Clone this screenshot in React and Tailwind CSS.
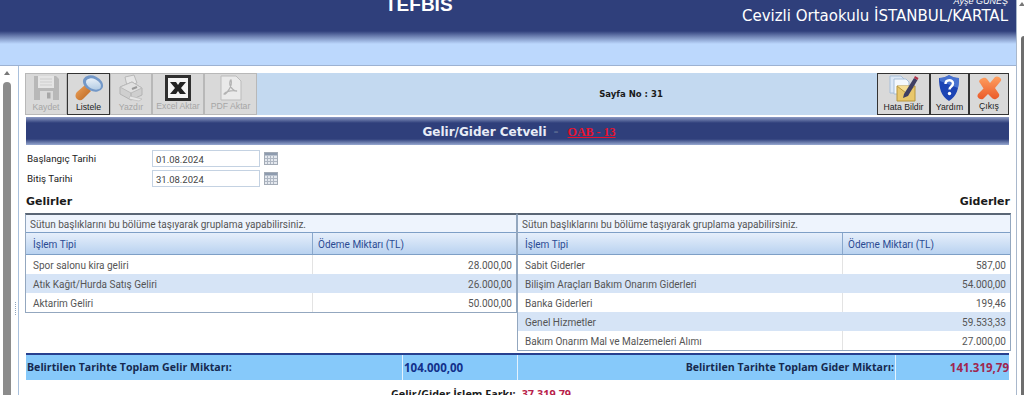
import React from "react";

const Floppy = () => (
  <svg width="28" height="28" viewBox="0 0 28 28">
    <path d="M2 2h22l3 3v21H2z" fill="#a3a3a3" />
    <rect x="6" y="2" width="16" height="12" fill="#eeeeee" />
    <path d="M8 5h12M8 8h12M8 11h12" stroke="#c6c6c6" strokeWidth="1" />
    <rect x="8" y="17" width="13" height="9" fill="#dadada" />
    <rect x="15" y="18.500" width="3.500" height="6" fill="#878787" />
  </svg>
);

const Lens = () => (
  <svg width="30" height="28" viewBox="0 0 30 28">
    <defs>
      <linearGradient id="lensG" x1="0" y1="0" x2="1" y2="1">
        <stop offset="0" stopColor="#f4f8fc" />
        <stop offset="1" stopColor="#a8c4e0" />
      </linearGradient>
      <linearGradient id="handleG" x1="0" y1="0" x2="1" y2="1">
        <stop offset="0" stopColor="#f0a45c" />
        <stop offset="1" stopColor="#b8641f" />
      </linearGradient>
    </defs>
    <path d="M3 18l8-7 6 6-8 8c-2 2-4 1.500-6 0s-2-5 0-7z" fill="url(#handleG)" />
    <ellipse cx="19" cy="9.500" rx="10.500" ry="7.500" transform="rotate(25 19 9.500)" fill="#7398c8" />
    <ellipse cx="19.500" cy="10" rx="8" ry="5" transform="rotate(25 19.500 10)" fill="url(#lensG)" />
  </svg>
);

const Printer = () => (
  <svg width="26" height="28" viewBox="0 0 26 28">
    <path d="M7 3l9-2 3 8-10 3z" fill="#f0f0f0" stroke="#a3a3a3" />
    <path d="M2 13l12-5 10 6v7l-11 5-11-6z" fill="#c9c9c9" stroke="#9b9b9b" />
    <path d="M2 13l11 6 11-5-10-6z" fill="#e6e6e6" stroke="#a8a8a8" />
    <path d="M13 19v7" stroke="#8f8f8f" />
    <path d="M12 22l12 3-3 2-10-2z" fill="#efefef" stroke="#a8a8a8" strokeWidth=".7" />
    <path d="M14 15l5-2" stroke="#707070" strokeWidth="2" />
  </svg>
);

const ExcelIcon = () => (
  <svg width="26" height="26" viewBox="0 0 26 26">
    <rect x="0" y="0" width="26" height="26" fill="#2f2f2f" />
    <rect x="3" y="3" width="20" height="20" fill="#f4f4f4" />
    <path d="M5 7h6l2 3 2-3h6l-5 6 5 6h-6l-2-3-2 3H5l5-6z" fill="#222222" />
  </svg>
);

const PdfIcon = () => (
  <svg width="22" height="26" viewBox="0 0 22 26">
    <path d="M1 1h15l5 5v19H1z" fill="#f6f6f6" stroke="#a9a9a9" />
    <path d="M11 5c1 3 0 7-3 11-1.500 2-3 3.500-4 3 1-2 6-4 13-3-3 .5-6-3-7-6-.5-2 0-5 1-5z" fill="none" stroke="#9a9a9a" strokeWidth="1.300" />
  </svg>
);

const Report = () => (
  <svg width="32" height="28" viewBox="0 0 32 28">
    <path d="M3 2h11l3 3v14H3z" fill="#dce8f6" stroke="#a8bfd8" />
    <path d="M7 5h12l3 3v12H7z" fill="#f4f8fc" stroke="#a8bfd8" />
    <path d="M10 12h18v15H10z" fill="#e9c76a" stroke="#b8963c" />
    <path d="M10 12l9 7 9-7" fill="#f5dd94" stroke="#b8963c" />
    <path d="M17 20L27 4l3.500 2L21 22l-5 2z" fill="#3f3f63" />
    <path d="M27 4l1-2 3.500 2-1 2z" fill="#b03048" />
  </svg>
);

const Shield = () => (
  <svg width="22" height="28" viewBox="0 0 22 28">
    <path d="M11 1c3 2 6 3 10 3 0 10-2 18-10 23C3 22 1 14 1 4c4 0 7-1 10-3z" fill="#1c44b4" />
    <path d="M11 1c3 2 6 3 10 3 0 4-.3 7-1 10L2 7 1.500 4c4 0 6.500-1 9.500-3z" fill="#5b86dc" opacity=".7" />
    <path d="M7.500 10c0-5 7.500-5 7.500-.5 0 3-3.500 3-3.500 6" fill="none" stroke="#fff" strokeWidth="2.400" />
    <circle cx="11.500" cy="19.500" r="1.700" fill="#fff" />
  </svg>
);

const CloseX = () => (
  <svg width="26" height="26" viewBox="0 0 26 26">
    <defs>
      <linearGradient id="xG" x1="0" y1="0" x2="0" y2="1">
        <stop offset="0" stopColor="#ffa060" />
        <stop offset="1" stopColor="#ea5a2a" />
      </linearGradient>
    </defs>
    <path d="M4 8c-2-2 0-4 3-5 2-.5 3 0 4 1l3 4 5-6c2-1.500 5 0 6 2 .5 1 0 2-1 3l-5 6 4 6c1 2-1 4-3 5-2 .5-3 0-4-1l-4-4-5 5c-2 1-5-.5-5.500-2.500 0-1 0-2 1-3l5-5z" fill="url(#xG)" />
  </svg>
);

const Calendar = () => (
  <svg width="14" height="13" viewBox="0 0 14 13">
    <rect x=".5" y=".5" width="13" height="12" fill="#e4e8ee" stroke="#a3abb6" />
    <rect x="1" y="1" width="12" height="2.500" fill="#8e9bae" />
    <path d="M3.500 4v8M6.500 4v8M9.500 4v8M1 6.500h12M1 9.500h12" stroke="#aeb6c2" />
  </svg>
);

function ToolBtn({ icon, label, width, active, solid, faded }) {
  return (
    <div
      className={`flex flex-col items-center justify-between h-[42px] pb-[3px] bg-[#d9d9d9] border ${
        active ? "border-[#333333]" : "border-[#b8b8b8]"
      } ${width}`}
    >
      <div className={`h-[30px] flex items-center justify-center ${faded && !solid ? "opacity-60" : ""}`}>{icon}</div>
      <span className={`text-[8.7px] leading-[10px] ${faded ? "text-[#a6a6a6]" : "text-[#222222]"}`}>{label}</span>
    </div>
  );
}

function DateRow({ label, value }) {
  return (
    <div className="flex items-center h-[17px]">
      <span className="w-[127px] pl-[2px] pt-[1px] text-[9.800px] text-[#222222] font-['Roboto',sans-serif]">{label}</span>
      <div className="w-[108px] h-[17px] border border-[#c4d2e2] bg-white pl-[3px] text-[9.500px] leading-[17px] text-[#444444] font-['Roboto',sans-serif]">
        {value}
      </div>
      <span className="ml-[4px] flex"><Calendar /></span>
    </div>
  );
}

function Grid({ rows, first, width }) {
  return (
    <div className={`${width} border-x border-b border-[#93a7bf] border-t-2 border-t-[#5a6675] font-['Roboto',sans-serif] text-[10px]`}>
      <div className="h-[18px] bg-[#eef4fd] border-b border-[#7e9fc6] pl-[4px] leading-[19px] text-[#555555]">
        Sütun başlıklarını bu bölüme taşıyarak gruplama yapabilirsiniz.
      </div>
      <div className="flex h-[22px] bg-[linear-gradient(#e6effb,#b9d2f0)] border-b border-[#7e9fc6] text-[#2b4b93] leading-[23px]">
        <div style={{ width: first }} className="pl-[7px] border-r border-[#8aa8cc] shrink-0">İşlem Tipi</div>
        <div className="pl-[5px]">Ödeme Miktarı (TL)</div>
      </div>
      {rows.map(([name, amount], i) => (
        <div key={name} className={`flex h-[19px] leading-[21px] text-[#555555] ${i % 2 ? "bg-[#d6e4f6]" : "bg-white"}`}>
          <div style={{ width: first }} className={`pl-[7px] shrink-0 ${i % 2 ? "" : "border-r border-[#e3e3e3]"}`}>{name}</div>
          <div className="flex-1 text-right pr-[4px]">{amount}</div>
        </div>
      ))}
    </div>
  );
}

const income = [
  ["Spor salonu kira geliri", "28.000,00"],
  ["Atık Kağıt/Hurda Satış Geliri", "26.000,00"],
  ["Aktarim Geliri", "50.000,00"],
];

const expense = [
  ["Sabit Giderler", "587,00"],
  ["Bilişim Araçları Bakım Onarım Giderleri", "54.000,00"],
  ["Banka Giderleri", "199,46"],
  ["Genel Hizmetler", "59.533,33"],
  ["Bakım Onarım Mal ve Malzemeleri Alımı", "27.000,00"],
];

export default function App() {
  return (
    <div className="w-[1024px] h-[414px] bg-white overflow-hidden font-['Liberation_Sans',sans-serif]">
      <div className="flex h-[395px] overflow-hidden">
        <div className="w-[1017px] shrink-0 flex flex-col border-r border-[#a9b8cc]">
          <header className="relative h-[44px] shrink-0 bg-[linear-gradient(#2f3f7b_0px,#2f3f7b_31px,#7488b8_37px,#bcd8fd_44px)]">
            <h1 className="absolute left-[385px] top-[-6px] text-[19px] leading-[22px] font-bold text-white">TEFBIS</h1>
            <div className="absolute right-[8px] top-[-4px] text-right text-white font-['DejaVu_Sans',sans-serif]">
              <div className="text-[9px] leading-[10px] italic font-['Liberation_Sans',sans-serif]">Ayşe GÜNEŞ</div>
              <div className="text-[15px] leading-[18px] mt-[1px]">Cevizli Ortaokulu İSTANBUL/KARTAL</div>
            </div>
          </header>
          <div className="h-[22px] shrink-0 bg-[#bcd8fd] border-b border-[#9db2d2]" />
          <div className="flex flex-1 min-h-0">
            <aside className="relative w-[19px] shrink-0 border-r border-[#a9c0dc] flex">
              <div className="w-[14px] flex flex-col items-center">
                <div className="mt-[5px] w-0 h-0 border-x-[3px] border-x-transparent border-b-[4px] border-b-[#777777]" />
                <div className="mt-[7px] w-[8px] flex-1 rounded-t-[4px] bg-[#8c8c8c]" />
              </div>
              <div className="absolute left-[15px] top-[236px] h-[13px] w-[1px] border-l border-dotted border-[#8fa4bd]" />
            </aside>
            <main className="flex-1 min-w-0 pl-[6px] pt-[7px]">
              <div className="flex items-stretch justify-between w-[984px] h-[42px] bg-[#c3d9f0]">
                <div className="flex">
                  <ToolBtn width="w-[42px]" label="Kaydet" icon={<Floppy />} faded />
                  <ToolBtn width="w-[43px]" label="Listele" icon={<Lens />} active />
                  <ToolBtn width="w-[42px]" label="Yazdır" icon={<Printer />} faded />
                  <ToolBtn width="w-[52px]" label="Excel Aktar" icon={<ExcelIcon />} faded solid />
                  <ToolBtn width="w-[53px]" label="PDF Aktar" icon={<PdfIcon />} faded />
                </div>
                <div className="flex items-center ml-[128px] text-[8.500px] font-bold text-[#1a1a1a] font-['DejaVu_Sans',sans-serif]">Sayfa No : 31</div>
                <div className="flex">
                  <ToolBtn width="w-[53px]" label="Hata Bildir" icon={<Report />} active />
                  <ToolBtn width="w-[39px]" label="Yardım" icon={<Shield />} active />
                  <ToolBtn width="w-[40px]" label="Çıkış" icon={<CloseX />} active />
                </div>
              </div>
              <div className="mt-[2px] ml-[1px] w-[983px] h-[28px] pl-[3px] pt-[1px] flex items-center justify-center font-['DejaVu_Sans',sans-serif] text-[12px] font-bold bg-[linear-gradient(#8d9bc4_0px,#2f3f7b_6px,#2f3f7b_22px,#97a8d0_28px)]">
                <span className="text-[#e8ecf6]">Gelir/Gider Cetveli</span>
                <span className="ml-[7px] text-[#55648f]">-</span>
                <span className="ml-[9px] text-[#e8132f] underline font-bold font-['Liberation_Serif',serif]">OAB - 13</span>
              </div>
              <div className="mt-[5px] flex flex-col gap-[3px]">
                <DateRow label="Başlangıç Tarihi" value="01.08.2024" />
                <DateRow label="Bitiş Tarihi" value="31.08.2024" />
              </div>
              <div className="mt-[8px] h-[14px] w-[985px] flex items-center justify-between font-['DejaVu_Sans',sans-serif] text-[11px] font-bold text-[#1a1a1a]">
                <span className="ml-[1px]">Gelirler</span>
                <span>Giderler</span>
              </div>
              <div className="mt-[4px] flex items-start w-[986px]">
                <Grid rows={income} first={287} width="w-[492px]" />
                <Grid rows={expense} first={325} width="w-[494px]" />
              </div>
              <div className="mt-[2px] ml-[1px] w-[983px] h-[27px] flex bg-[#86c9fa] border-t-2 border-[#27408f] text-[10.600px] font-bold font-['Open_Sans',sans-serif]">
                <div className="w-[377px] pl-[1px] flex items-center text-[#16294f] border-r border-[#e4f2fd]">Belirtilen Tarihte Toplam Gelir Miktarı:</div>
                <div className="w-[115px] pl-[1px] flex items-center text-[11.500px] text-[#12308a] border-r border-[#e4f2fd]">104.000,00</div>
                <div className="w-[378px] pr-[1px] flex items-center justify-end text-[#16294f] border-r border-[#e4f2fd]">Belirtilen Tarihte Toplam Gider Miktarı:</div>
                <div className="flex-1 flex items-center justify-end text-[11.500px] text-[#a0264f]">141.319,79</div>
              </div>
              <div className="mt-[7px] ml-[366px] flex gap-[6px] text-[10.800px] font-bold leading-[13px] font-['Open_Sans',sans-serif] whitespace-nowrap">
                <span className="text-[#1a1a1a]">Gelir/Gider İşlem Farkı:</span>
                <span className="text-[#b81e4a]">37.319,79</span>
              </div>
            </main>
          </div>
        </div>
        <div className="flex-1 relative">
          <div className="absolute left-[2px] top-[2px] w-0 h-0 border-x-[3px] border-x-transparent border-b-[4px] border-b-[#777777]" />
          <div className="absolute left-[4px] top-[36px] bottom-0 w-[8px] rounded-t-[3px] bg-[#6e6e6e]" />
        </div>
      </div>
    </div>
  );
}
